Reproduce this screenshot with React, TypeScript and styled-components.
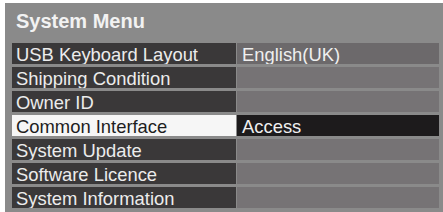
import React from "react";
import styled, { createGlobalStyle } from "styled-components";

const Global = createGlobalStyle`
  html, body { margin: 0; padding: 0; background: #ffffff; overflow: hidden; }
  body { font-family: "Liberation Sans", Arial, sans-serif; }
`;

const Panel = styled.div`
  margin: 3px 0 0 5px;
  width: 438px;
  height: 209px;
  background: #8a8a8a;
  padding: 0 4px 0 7px;
  box-sizing: border-box;
  overflow: hidden;
`;

const Title = styled.div`
  padding: 6px 0 10px 4px;
  line-height: 24px;
  font-size: 20px;
  font-weight: bold;
  color: #f2f2f2;
`;

const Table = styled.div`
  display: grid;
  grid-template-columns: 224px 1fr;
  column-gap: 1px;
  row-gap: 3px;
`;

const LeftCell = styled.div<{ $selected?: boolean }>`
  height: 21px;
  box-sizing: border-box;
  padding: 1px 0 0 4px;
  line-height: 21px;
  font-size: 18.4px;
  white-space: nowrap;
  overflow: hidden;
  background: ${(p) => (p.$selected ? "#f6f6f6" : "#3a3839")};
  color: ${(p) => (p.$selected ? "#1e1e1e" : "#ececec")};
`;

const RightCell = styled.div<{ $tone: "value" | "selected" | "empty" }>`
  height: 21px;
  box-sizing: border-box;
  padding: 1px 0 0 5px;
  line-height: 21px;
  font-size: 18.4px;
  white-space: nowrap;
  overflow: hidden;
  background: ${(p) =>
    p.$tone === "selected" ? "#1d1b1c" : p.$tone === "value" ? "#6c696b" : "#767375"};
  color: #efefef;
`;

type Row = { label: string; value?: string; selected?: boolean };

const rows: Row[] = [
  { label: "USB Keyboard Layout", value: "English(UK)" },
  { label: "Shipping Condition" },
  { label: "Owner ID" },
  { label: "Common Interface", value: "Access", selected: true },
  { label: "System Update" },
  { label: "Software Licence" },
  { label: "System Information" },
];

export default function App() {
  return (
    <>
      <Global />
      <Panel>
        <Title>System Menu</Title>
        <Table>
          {rows.map((r) => (
            <React.Fragment key={r.label}>
              <LeftCell $selected={r.selected}>{r.label}</LeftCell>
              <RightCell $tone={r.selected ? "selected" : r.value ? "value" : "empty"}>
                {r.value ?? ""}
              </RightCell>
            </React.Fragment>
          ))}
        </Table>
      </Panel>
    </>
  );
}
